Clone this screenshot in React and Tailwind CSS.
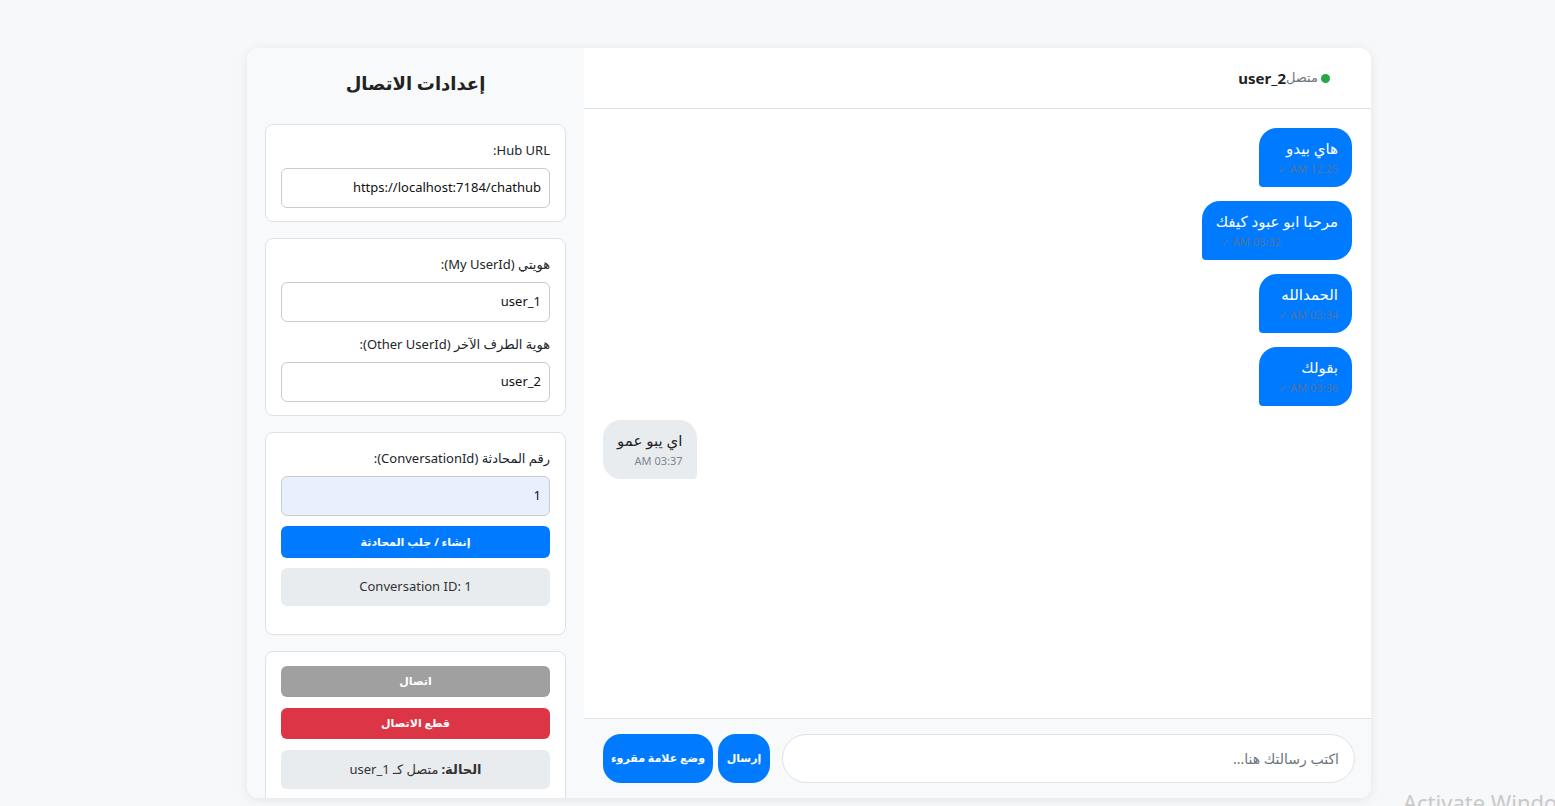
const messages = [
  { id: 1, text: 'هاي بيدو', time: '12:25 AM ✓', mine: true },
  { id: 2, text: 'مرحبا ابو عبود كيفك', time: '03:32 AM ✓', mine: true },
  { id: 3, text: 'الحمدالله', time: '03:34 AM ✓', mine: true },
  { id: 4, text: 'بقولك', time: '03:36 AM ✓', mine: true },
  { id: 5, text: 'اي يبو عمو', time: '03:37 AM', mine: false },
];

function Field({ label, value, highlight, className = '' }) {
  return (
    <div className={className}>
      <label className="block text-[13px] leading-[21px] text-[#212529] mb-[7px]">{label}</label>
      <div
        className={`h-[40px] rounded-[6px] border border-[#ccc] px-[8px] flex items-center text-[13px] text-[#111] ${
          highlight ? 'bg-[#e8f0fe]' : 'bg-white'
        }`}
      >
        {value}
      </div>
    </div>
  );
}

function Card({ children, className = '' }) {
  return (
    <div className={`bg-white border border-[#dee2e6] rounded-[8px] px-[15px] ${className}`}>{children}</div>
  );
}

function Bubble({ msg }) {
  if (msg.mine) {
    return (
      <div className="self-start bg-[#007bff] text-white rounded-t-[18px] rounded-br-[18px] rounded-bl-[4px] px-[14px] pt-[9px] pb-[10px]">
        <div className="text-[15px] leading-[22px]">{msg.text}</div>
        <div className="text-[11px] leading-4 mt-[2px] text-left pl-[5px] text-[#52749c]">{msg.time}</div>
      </div>
    );
  }
  return (
    <div className="self-end bg-[#e9ecef] text-[#212529] rounded-t-[18px] rounded-bl-[18px] rounded-br-[4px] px-[14px] pt-[9px] pb-[10px]">
      <div className="text-[15px] leading-[22px]">{msg.text}</div>
      <div className="text-[11px] leading-4 mt-[2px] text-[#7b8591]">{msg.time}</div>
    </div>
  );
}

export default function App() {
  return (
    <div
      className="relative min-h-screen bg-[#f7f8fa] pt-[48px] pl-[247px] overflow-hidden"
      style={{ fontFamily: '"Noto Sans", "DejaVu Sans", sans-serif' }}
    >
      <div
        dir="rtl"
        className="w-[1124px] h-[750px] flex bg-white rounded-[12px] shadow-[0_2px_12px_rgba(0,0,0,0.08)] overflow-hidden"
      >
        {/* chat panel */}
        <div className="w-[787px] flex flex-col bg-white">
          <div className="h-[61px] border-b border-[#dee2e6] flex items-center pr-[41px] shrink-0">
            <span className="w-[9px] h-[9px] rounded-full bg-[#28a745] ml-[3px]" />
            <span className="text-[13px] text-[#6c757d]">متصل</span>
            <span className="text-[15px] font-bold text-[#222]">user_2</span>
          </div>

          <div className="flex-1 flex flex-col gap-[14px] p-[19px] overflow-hidden">
            {messages.map((m) => (
              <Bubble key={m.id} msg={m} />
            ))}
          </div>

          <div className="h-[80px] shrink-0 border-t border-[#dee2e6] bg-[#f8f9fa] flex items-center pr-[16px] pl-[19px]">
            <div className="flex-1 h-[49px] rounded-full border border-[#dee2e6] bg-white px-[15px] flex items-center text-[14px] text-[#6c757d]">
              اكتب رسالتك هنا...
            </div>
            <button className="mr-[12px] h-[49px] w-[52px] rounded-[18px] bg-[#007bff] text-white text-[11px] font-bold">
              إرسال
            </button>
            <button className="mr-[5px] h-[49px] w-[110px] rounded-[18px] bg-[#007bff] text-white text-[11px] font-bold">
              وضع علامة مقروء
            </button>
          </div>
        </div>

        {/* settings sidebar */}
        <div className="w-[337px] bg-[#f8f9fa] px-[18px] pt-[21px] overflow-hidden flex flex-col gap-[16px]">
          <h2 className="text-[18px] leading-7 font-bold text-[#222] text-center mb-[11px]">إعدادات الاتصال</h2>

          <Card className="pt-[15px] pb-[13px]">
            <Field label="Hub URL:" value="https://localhost:7184/chathub" />
          </Card>

          <Card className="pt-[15px] pb-[13px]">
            <Field label="هويتي (My UserId):" value="user_1" />
            <Field label="هوية الطرف الآخر (Other UserId):" value="user_2" className="mt-[12px]" />
          </Card>

          <Card className="pt-[15px] pb-[13px]">
            <Field label="رقم المحادثة (ConversationId):" value="1" highlight />
            <button className="mt-[10px] w-full h-[32px] rounded-[6px] bg-[#007bff] text-white text-[11px] font-bold">
              إنشاء / جلب المحادثة
            </button>
            <div className="mt-[10px] mb-[15px] h-[38px] rounded-[6px] bg-[#e9ecef] flex items-center justify-center text-[13px] text-[#333]">
              <span dir="ltr">Conversation ID: 1</span>
            </div>
          </Card>

          <Card className="pt-[14px] pb-[14px] shrink-0">
            <button className="w-full h-[31px] rounded-[6px] bg-[#a0a0a0] text-white text-[11px] font-bold">
              اتصال
            </button>
            <button className="mt-[11px] w-full h-[31px] rounded-[6px] bg-[#dc3545] text-white text-[11px] font-bold">
              قطع الاتصال
            </button>
            <div className="mt-[11px] h-[39px] rounded-[6px] bg-[#e9ecef] flex items-center justify-center text-[13px] text-[#333]">
              <b className="font-bold ml-[3px]">الحالة:</b> متصل كـ user_1
            </div>
            <div className="h-[20px]" />
          </Card>
        </div>
      </div>

      <div className="absolute left-[1403px] top-[786px] text-[22px] text-[#c9c9c9] whitespace-nowrap">
        Activate Windows
      </div>
    </div>
  );
}
